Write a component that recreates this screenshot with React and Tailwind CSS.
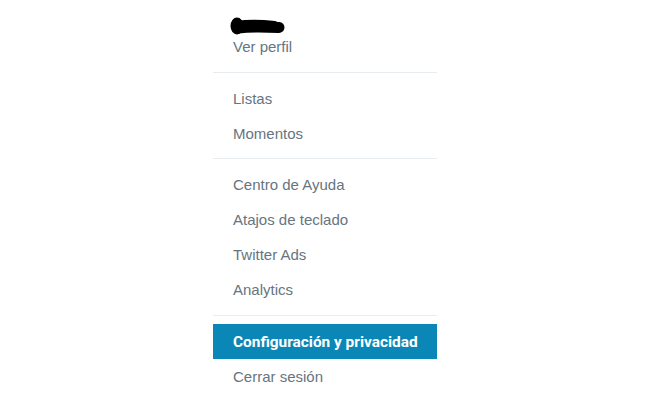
import React from "react";

const Item = ({ children }) => (
  <div className="h-[35px] flex items-center px-[20px] text-[15px] text-[#66757f] leading-[20px] whitespace-nowrap">
    {children}
  </div>
);

const Divider = () => <div className="h-px bg-[#e6ecf0] mt-[8px] mb-[8px]" />;

export default function App() {
  return (
    <div className="w-[650px] h-[400px] bg-white overflow-hidden" style={{ fontFamily: '"Liberation Sans", Arial, sans-serif' }}>
      <div className="ml-[213px] w-[224px] flex flex-col">
        <div className="pt-[17px] px-[17px]">
          <svg width="58" height="19" viewBox="0 0 58 19">
            <ellipse cx="7" cy="9" rx="6.5" ry="8.5" fill="#000" />
            <path d="M8 11 C20 9.5, 40 10, 49 10.5" stroke="#000" strokeWidth="11" strokeLinecap="round" fill="none" />
            <path d="M6 6 C20 4, 35 5, 45 6" stroke="#000" strokeWidth="4" strokeLinecap="round" fill="none" />
          </svg>
        </div>
        <div className="px-[20px] text-[15px] text-[#66757f] leading-[20px] mt-[1px] mb-[15px]">Ver perfil</div>
        <div className="h-px bg-[#e6ecf0] mb-[8px]" />
        <Item>Listas</Item>
        <Item>Momentos</Item>
        <div className="h-px bg-[#e6ecf0] mt-[7px] mb-[8px]" />
        <Item>Centro de Ayuda</Item>
        <Item>Atajos de teclado</Item>
        <Item>Twitter Ads</Item>
        <Item>Analytics</Item>
        <Divider />
        <div
          className="h-[35px] flex items-center px-[20px] text-[15.4px] font-bold text-white bg-[#0a87b7] leading-[20px] whitespace-nowrap"
          style={{ fontFamily: 'Roboto, "Liberation Sans", sans-serif' }}
        >
          Configuración y privacidad
        </div>
        <Item>Cerrar sesión</Item>
      </div>
    </div>
  );
}
